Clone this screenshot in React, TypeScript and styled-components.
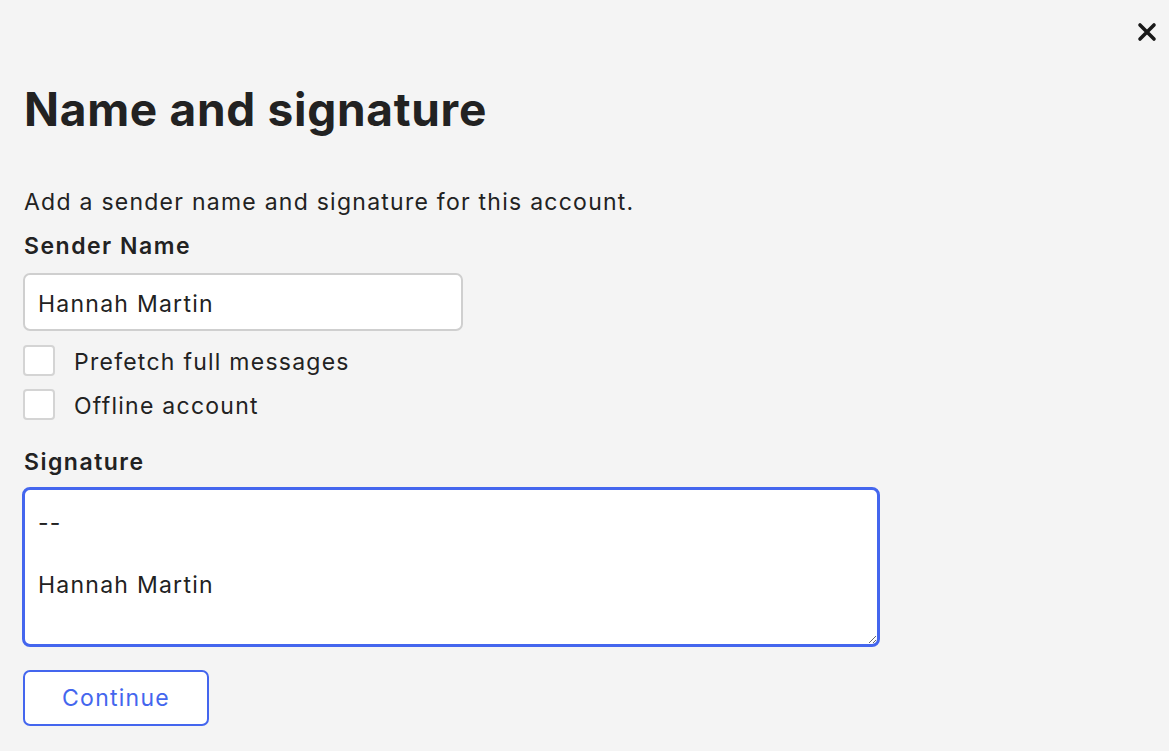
import React from "react";
import styled, { createGlobalStyle } from "styled-components";

const Global = createGlobalStyle`
  html, body { margin: 0; padding: 0; background: #f4f4f4; }
  body { font-family: Inter, "Noto Sans", sans-serif; color: #222; }
  * { box-sizing: border-box; }
`;

const Page = styled.div`
  position: relative;
  min-height: 751px;
  padding: 79px 24px 0 24px;
  display: flex;
  flex-direction: column;
  align-items: flex-start;
  font-size: 23px;
  letter-spacing: 1.25px;
`;

const Close = styled.button`
  position: absolute;
  top: 20px;
  right: 10px;
  width: 24px;
  height: 24px;
  padding: 0;
  border: none;
  background: transparent;
  display: flex;
  align-items: center;
  justify-content: center;
  cursor: pointer;
`;

const Title = styled.h1`
  margin: 0;
  font-size: 46px;
  font-weight: 700;
  line-height: 60px;
  letter-spacing: 0.7px;
  color: #222;
`;

const Intro = styled.p`
  margin: 47px 0 0 0;
  line-height: 32px;
`;

const Label = styled.label<{ $gap: number }>`
  display: block;
  margin-top: ${(p) => p.$gap}px;
  line-height: 32px;
  font-weight: 600;
  letter-spacing: 1.5px;
`;

const TextInput = styled.input`
  margin-top: 11px;
  margin-left: -1px;
  width: 440px;
  height: 58px;
  padding: 3px 13px 0 13px;
  font: inherit;
  letter-spacing: inherit;
  color: #222;
  background: #fff;
  border: 2px solid #cfcfcf;
  border-radius: 7px;
  outline: none;
`;

const Options = styled.div`
  margin-top: 14px;
  display: flex;
  flex-direction: column;
  gap: 13px;
`;

const CheckRow = styled.label`
  display: flex;
  align-items: flex-start;
  gap: 19px;
  height: 31px;
  margin-left: -1px;
`;

const CheckText = styled.span`
  margin-top: 4px;
  line-height: 27px;
`;

const Box = styled.span`
  width: 32px;
  height: 31px;
  background: #fff;
  border: 2px solid #d4d4d4;
  border-radius: 4px;
  flex: none;
`;

const Area = styled.textarea`
  margin-top: 9px;
  margin-left: -2px;
  width: 858px;
  height: 160px;
  padding: 18px 13px 14px 13px;
  font: inherit;
  letter-spacing: inherit;
  line-height: 31px;
  color: #222;
  background: #fff;
  border: 3px solid #4466ee;
  border-radius: 8px;
  outline: none;
  resize: both;
`;

const Button = styled.button`
  margin-top: 23px;
  margin-left: -1px;
  width: 186px;
  height: 56px;
  font: inherit;
  letter-spacing: inherit;
  color: #4466ee;
  background: #fff;
  border: 2px solid #4466ee;
  border-radius: 7px;
  cursor: pointer;
`;

export default function App() {
  return (
    <>
      <Global />
      <Page>
        <Close aria-label="Close">
          <svg width="20" height="20" viewBox="0 0 20 20">
            <path d="M3 3 L17 17 M17 3 L3 17" stroke="#1a1a1a" strokeWidth="3.6" strokeLinecap="round" />
          </svg>
        </Close>
        <Title>Name and signature</Title>
        <Intro>Add a sender name and signature for this account.</Intro>
        <Label $gap={12}>Sender Name</Label>
        <TextInput defaultValue="Hannah Martin" />
        <Options>
          <CheckRow>
            <Box />
            <CheckText>Prefetch full messages</CheckText>
          </CheckRow>
          <CheckRow>
            <Box />
            <CheckText>Offline account</CheckText>
          </CheckRow>
        </Options>
        <Label $gap={26}>Signature</Label>
        <Area defaultValue={"--\n\nHannah Martin"} />
        <Button>Continue</Button>
      </Page>
    </>
  );
}
